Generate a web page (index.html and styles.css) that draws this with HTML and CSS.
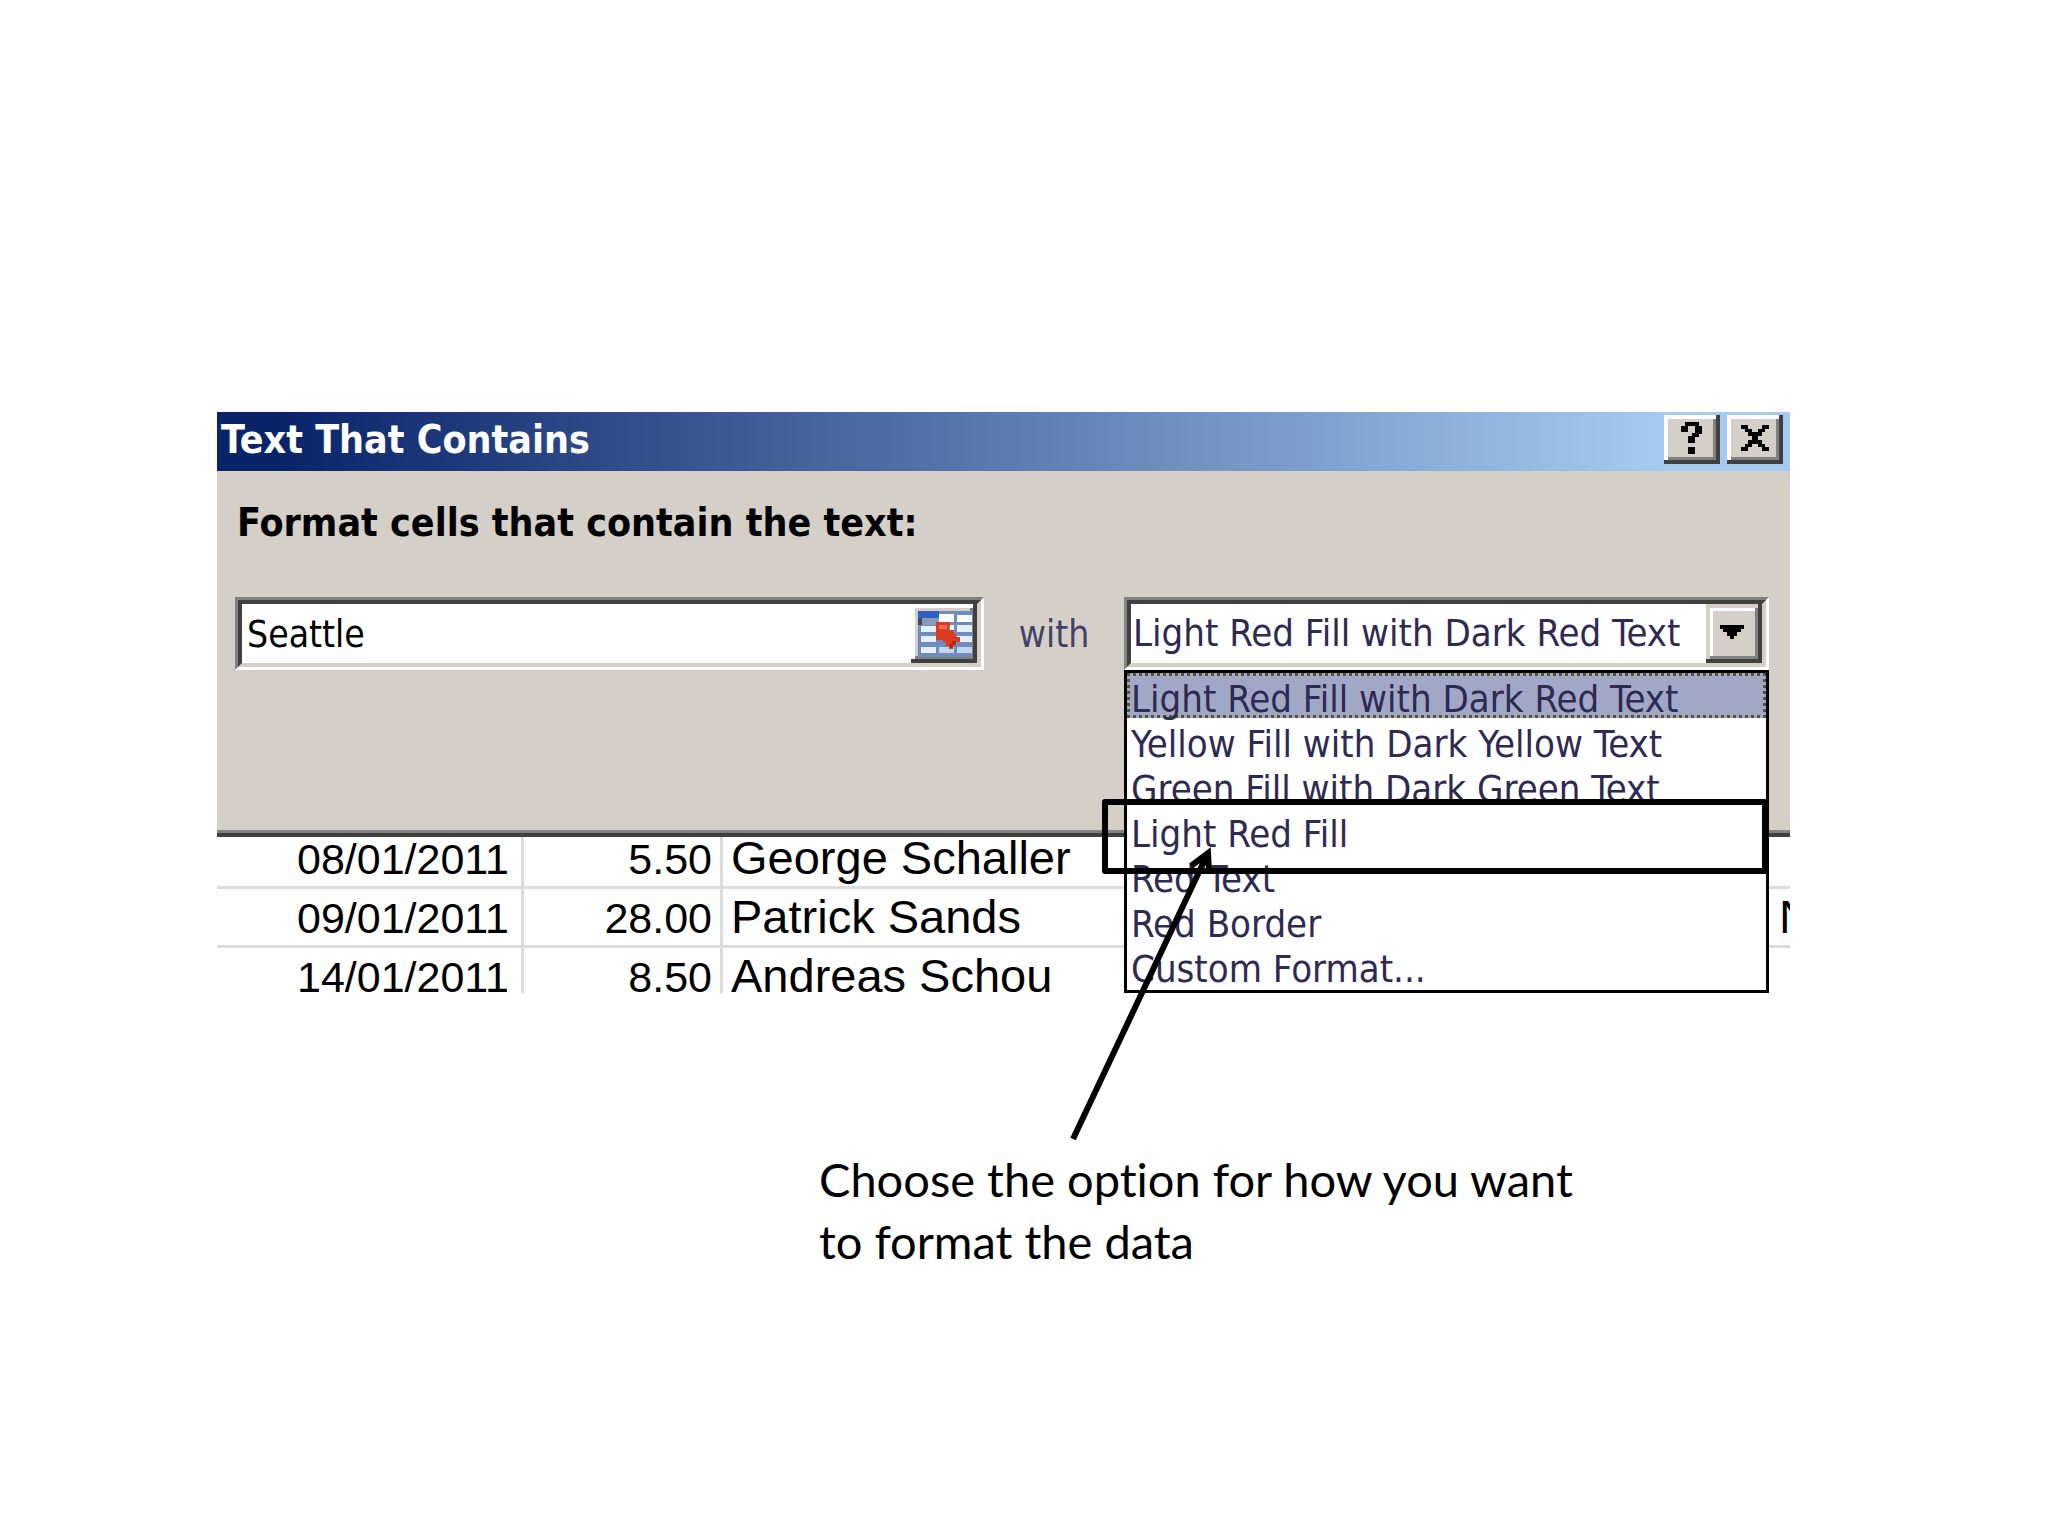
FILE: index.html
```html
<!DOCTYPE html>
<html lang="en">
<head>
  <meta charset="utf-8">
  <meta name="viewport" content="width=device-width, initial-scale=1">
  <title>Text That Contains</title>
  <link rel="stylesheet" href="styles.css">
</head>
<body>
  <main class="slide">
    <section class="dialog" aria-labelledby="dialog-title">
      <header class="titlebar">
        <h1 class="titlebar-text" id="dialog-title">Text That Contains</h1>
        <div class="titlebar-buttons">
          <button class="window-button" type="button" aria-label="Help">
            <svg width="22" height="32" viewBox="0 0 22 32" aria-hidden="true"><path d="M4 0h14v4h3v8h-3v3h-4v6H7v-7h4v-3h3V4H7v6H0V4h4zM7 25h7v7H7z"/></svg>
          </button>
          <button class="window-button" type="button" aria-label="Close">
            <svg width="28" height="26" viewBox="0 0 28 26" aria-hidden="true"><path d="M0 0h7v4h4v3h6V4h4V0h7v4h-4v3h-3v4h-4v4h4v4h3v3h4v4h-7v-4h-4v-3h-6v3H7v4H0v-4h4v-3h3v-4h4v-4H7V7H4V4H0z"/></svg>
          </button>
        </div>
      </header>
      <form class="dialog-body">
        <label class="prompt" for="match-text">Format cells that contain the text:</label>
        <div class="rule">
          <div class="field">
            <div class="field-inner">
              <input class="field-control field-input" id="match-text" type="text" value="Seattle">
              <button class="range-button" type="button" aria-label="Select range">
                <svg width="54" height="46" viewBox="0 0 54 46" aria-hidden="true">
                  <rect width="54" height="46" fill="#6f8cc0"/>
                  <path fill="#2f5fc4" d="M0 0h21v7H0z"/>
                  <path fill="#3a4a62" d="M0 7h4v7H0z"/>
                  <path fill="#8b9bb5" d="M4 7h17v7H4z"/>
                  <path fill="#fff" d="M21 3h15v8H21zM39 4h15v7H39z"/>
                  <path fill="#e6effa" d="M3 15h15v6H3zM39 14h15v7H39zM3 25h15v6H3zM39 25h15v6H39zM3 36h15v6H3z"/>
                  <path fill="#c3d5ef" d="M21 36h15v6H21zM39 36h15v6H39z"/>
                  <path fill="#fff" d="M32 14h4v7h-4z"/>
                  <path fill="#dd3a22" d="M18 11h14v4h-1v4h5v4h2v3h4v5h-4v4h-3v3h-4v-3h-3v-4h-3v-2h-7z"/>
                  <path fill="#f06a50" d="M21 14h8v4h-8z"/>
                  <path fill="#a82a1c" d="M34 30h4v3h-3v4h-3v-4h2z"/>
                </svg>
              </button>
            </div>
          </div>
          <label class="joiner" for="format-choice">with</label>
          <div class="picker">
            <div class="field">
              <div class="field-inner">
                <select class="field-control field-select" id="format-choice">
                  <option>Light Red Fill with Dark Red Text</option>
                </select>
                <span class="drop-arrow" aria-hidden="true">
                  <svg width="24" height="14" viewBox="0 0 24 14"><path d="M0 0h24v4h-3v3h-4v4h-3v3h-4v-3H7V7H3V4H0z"/></svg>
                </span>
              </div>
            </div>
            <ul class="options" role="listbox" aria-label="Formats">
              <li class="option option-active" role="option" aria-selected="true">Light Red Fill with Dark Red Text</li>
              <li class="option" role="option">Yellow Fill with Dark Yellow Text</li>
              <li class="option" role="option">Green Fill with Dark Green Text</li>
              <li class="option option-marked" role="option">Light Red Fill</li>
              <li class="option" role="option">Red Text</li>
              <li class="option" role="option">Red Border</li>
              <li class="option" role="option">Custom Format...</li>
            </ul>
            <svg class="pointer" width="170" height="310" viewBox="0 0 170 310" aria-hidden="true">
              <path d="M13 299 147 15M131 26 148 13 149 32"/>
            </svg>
          </div>
        </div>
      </form>
    </section>
    <div class="sheet">
      <table class="cells">
        <colgroup>
          <col class="col-date"><col class="col-amount"><col class="col-name"><col class="col-rest">
        </colgroup>
        <tbody>
          <tr><td class="date">08/01/2011</td><td class="amount">5.50</td><td class="name">George Schaller</td><td class="rest"></td></tr>
          <tr><td class="date">09/01/2011</td><td class="amount">28.00</td><td class="name">Patrick Sands</td><td class="rest">N</td></tr>
          <tr><td class="date">14/01/2011</td><td class="amount">8.50</td><td class="name">Andreas Schou</td><td class="rest"></td></tr>
        </tbody>
      </table>
    </div>
    <p class="note">Choose the option for how you want to format the data</p>
  </main>
</body>
</html>
```

FILE: styles.css
```css
*,
*::after {
  box-sizing: border-box;
}

body {
  margin: 0;
  background: #fff;
  color: #000;
}

.slide {
  padding: 412px 258px 0 217px;
}

/* Dialog */
.dialog {
  border-bottom: 4px solid #404040;
  background: #d4d0c8;
  font-family: "DejaVu Sans Condensed", "DejaVu Sans", sans-serif;
}

.titlebar {
  display: flex;
  justify-content: space-between;
  align-items: flex-start;
  height: 59px;
  padding: 3px 7px 0 4px;
  background: linear-gradient(to right, #0a246a 4%, #a6caf0 92%);
}

.titlebar-text {
  margin: 0;
  color: #fff;
  font-size: 39px;
  font-weight: 700;
  line-height: 50px;
}

.titlebar-buttons {
  display: flex;
  gap: 7px;
}

.window-button,
.range-button,
.drop-arrow {
  display: flex;
  flex: none;
  align-items: center;
  justify-content: center;
  border: 0;
  background: #d4d0c8;
}

.window-button {
  width: 56px;
  height: 49px;
  padding: 0 0 4px;
  box-shadow: inset -4px -4px #404040, inset 4px 4px #fff, inset -7px -7px #808080;
}

.dialog-body {
  padding: 28px 21px 160px 18px;
  border-bottom: 3px solid #808080;
}

.prompt {
  display: block;
  margin-bottom: 50px;
  padding-left: 2px;
  font-size: 39px;
  font-weight: 700;
  line-height: 48px;
}

.rule {
  display: grid;
  grid-template-columns: minmax(0, 749fr) 140px minmax(0, 645fr);
}

.field {
  border: 3px solid;
  border-color: #808080 #fff #fff #808080;
}

.field-inner {
  display: flex;
  height: 67px;
  border: 4px solid;
  border-color: #404040 #d4d0c8 #d4d0c8 #404040;
  background: #fff;
}

.field-control {
  flex: 1;
  min-width: 0;
  margin: 0;
  border: 0;
  border-radius: 0;
  outline: 0;
  background: none;
  appearance: none;
  font-family: inherit;
}

.field-input {
  padding: 2px 0 0 5px;
  color: #000;
  font-size: 37px;
}

.field-select {
  padding: 0 0 2px 2px;
  color: #2e2a52;
  font-size: 38px;
}

.range-button {
  width: 66px;
  padding: 0 0 0 2px;
  box-shadow: inset -4px -4px #404040, inset 4px 4px #fff, inset -7px -7px #808080;
}

.drop-arrow {
  width: 56px;
  padding: 0 4px 4px 0;
  box-shadow: inset -4px -4px #404040, inset 4px 4px #d4d0c8, inset -7px -7px #808080, inset 7px 7px #fff;
}

.joiner {
  padding-top: 2px;
  color: #45416a;
  font-size: 37px;
  line-height: 71px;
  text-align: center;
}

/* Open list, laid over the sheet below the dialog */
.picker {
  position: relative;
}

.options {
  position: absolute;
  top: 100%;
  left: 0;
  right: 0;
  margin: 0;
  padding: 0 0 2px;
  border: 3px solid #000;
  background: #fff;
  list-style: none;
}

.option {
  height: 45px;
  padding: 6px 0 0 4px;
  color: #2e2a52;
  font-size: 38px;
  line-height: 40px;
  white-space: nowrap;
}

.option-active {
  padding: 3px 0 0 1px;
  border: 3px dotted #55552f;
  background: #a0a8c6;
}

.option-marked {
  position: relative;
}

.option-marked::after {
  content: "";
  position: absolute;
  top: -9px;
  left: -25px;
  right: -2px;
  height: 75px;
  border: 6px solid #000;
  border-radius: 3px;
}

.pointer {
  position: absolute;
  top: 243px;
  left: -64px;
  fill: none;
  stroke: #000;
  stroke-width: 6px;
}

/* Worksheet rows; the dialog covers the top of the first one */
.sheet {
  height: 156px;
  overflow: hidden;
}

.cells {
  width: 100%;
  border-collapse: separate;
  border-spacing: 0;
  table-layout: fixed;
  font-family: "Liberation Sans", Arial, sans-serif;
}

.col-date {
  width: 307px;
}

.col-amount {
  width: 199px;
}

.col-rest {
  width: 24px;
}

.cells td {
  height: 59px;
  padding: 0;
  border-bottom: 3px solid #dcdcdc;
  font-size: 47px;
  line-height: 56px;
  vertical-align: baseline;
  white-space: nowrap;
}

.cells .date,
.cells .amount {
  border-right: 3px solid #dcdcdc;
  font-size: 43px;
  line-height: 50px;
  text-align: right;
}

.cells tr:first-child td {
  height: 52px;
  line-height: 42px;
}

.cells tr:first-child .date,
.cells tr:first-child .amount {
  line-height: 36px;
}

.cells .date {
  padding-right: 12px;
}

.cells .amount {
  padding-right: 8px;
}

.cells .name {
  padding-left: 8px;
}

.cells .rest {
  padding-left: 13px;
}

/* Caption */
.note {
  max-width: 780px;
  margin: 155px 0 0 602px;
  font-family: Lato, Carlito, Calibri, sans-serif;
  font-size: 47px;
  font-variant-ligatures: none;
  line-height: 62px;
}
```
